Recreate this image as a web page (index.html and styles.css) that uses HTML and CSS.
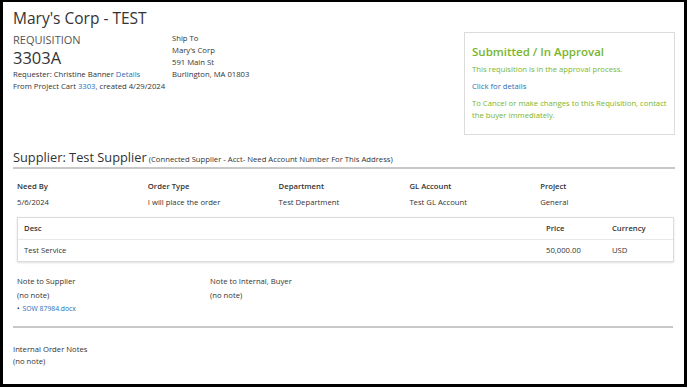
FILE: index.html
```html
<!DOCTYPE html>
<html lang="en">
<head>
    <meta charset="UTF-8">
    <meta name="viewport" content="width=device-width, initial-scale=1.0">
    <title>Requisition 3303A</title>
    <link rel="stylesheet" href="styles.css">
</head>
<body>
    <div class="page">
        <h1 class="company">Mary's Corp - TEST</h1>

        <div class="head-row">
            <div class="req">
                <div class="req-label">REQUISITION</div>
                <div class="req-num">3303A</div>
                <div class="meta">Requester: Christine Banner <a href="#">Details</a></div>
                <div class="meta">From Project Cart <a href="#">3303</a>, created 4/29/2024</div>
            </div>

            <div class="ship">
                <div>Ship To</div>
                <div>Mary's Corp</div>
                <div>591 Main St</div>
                <div>Burlington, MA 01803</div>
            </div>

            <div class="status">
                <h2>Submitted / In Approval</h2>
                <p>This requisition is in the approval process.</p>
                <p><a href="#">Click for details</a></p>
                <p>To Cancel or make changes to this Requisition, contact the buyer immediately.</p>
            </div>
        </div>

        <div class="supplier">
            <span class="supplier-name">Supplier: Test Supplier</span>
            <span class="supplier-note">(Connected Supplier - Acct- Need Account Number For This Address)</span>
        </div>

        <div class="fields">
            <div class="field">
                <div class="field-label">Need By</div>
                <div>5/6/2024</div>
            </div>
            <div class="field">
                <div class="field-label">Order Type</div>
                <div>I will place the order</div>
            </div>
            <div class="field">
                <div class="field-label">Department</div>
                <div>Test Department</div>
            </div>
            <div class="field">
                <div class="field-label">GL Account</div>
                <div>Test GL Account</div>
            </div>
            <div class="field">
                <div class="field-label">Project</div>
                <div>General</div>
            </div>
        </div>

        <div class="lines">
            <div class="line line-head">
                <div class="col-desc">Desc</div>
                <div class="col-price">Price</div>
                <div class="col-cur">Currency</div>
            </div>
            <div class="line">
                <div class="col-desc">Test Service</div>
                <div class="col-price">50,000.00</div>
                <div class="col-cur">USD</div>
            </div>
        </div>

        <div class="notes">
            <div class="note">
                <div>Note to Supplier</div>
                <div>(no note)</div>
                <ul class="files">
                    <li><a href="#">SOW 87984.docx</a></li>
                </ul>
            </div>
            <div class="note">
                <div>Note to Internal, Buyer</div>
                <div>(no note)</div>
            </div>
        </div>

        <div class="internal">
            <div>Internal Order Notes</div>
            <div>(no note)</div>
        </div>
    </div>
</body>
</html>
```

FILE: styles.css
```css
:root {
    --text-color: #333;
    --muted-color: #555;
    --link-color: #2a6db5;
    --green-color: #7ab52a;
    --border-color: #dcdcdc;
    --rule-color: #c8c8c8;
}

* {
    margin: 0;
    padding: 0;
    box-sizing: border-box;
}

body {
    font-family: 'Open Sans', 'Noto Sans', sans-serif;
    color: var(--text-color);
    background: #fff;
}

a {
    color: var(--link-color);
    text-decoration: none;
}

.page {
    width: 687px;
    height: 387px;
    border: 3px solid #000;
    border-top-width: 2px;
    padding: 5px 9px 0 10px;
    font-size: 7.7px;
    line-height: 12px;
}

.company {
    font-size: 15.5px;
    font-weight: 400;
    line-height: 22px;
}

.head-row {
    display: flex;
    align-items: flex-start;
    margin-top: 3px;
}

.req {
    width: 159px;
    padding-top: 1px;
}

.req-label {
    font-size: 11px;
    line-height: 14px;
    color: var(--muted-color);
}

.req-num {
    font-size: 16.5px;
    line-height: 21px;
}

.meta {
    line-height: 12px;
}

.ship {
    line-height: 12px;
}

.status {
    margin-left: auto;
    width: 211px;
    height: 103px;
    border: 1px solid var(--border-color);
    padding: 11px 7px;
    color: var(--green-color);
}

.status h2 {
    font-size: 11.5px;
    font-weight: 600;
    line-height: 16px;
    margin-bottom: 3px;
}

.status p {
    line-height: 12px;
    margin-bottom: 5px;
}

.supplier {
    margin-top: 13px;
    padding-bottom: 1px;
    border-bottom: 2px solid var(--rule-color);
}

.supplier-name {
    font-size: 12.8px;
    line-height: 18px;
}

.supplier-note {
    font-size: 7.7px;
}

.fields {
    display: flex;
    padding: 9px 4px 0;
}

.field {
    width: 131px;
    line-height: 16px;
}

.field-label {
    font-weight: 600;
}

.lines {
    margin: 7px 1px 0 4px;
    border: 1px solid var(--border-color);
    box-shadow: 0 1px 2px rgba(0, 0, 0, 0.12);
}

.line {
    display: flex;
    padding: 0 6px;
    line-height: 21px;
}

.line-head {
    font-weight: 600;
    border-bottom: 1px solid #e8e8e8;
}

.col-desc {
    flex: 1;
}

.col-price {
    width: 66px;
}

.col-cur {
    width: 55px;
}

.notes {
    display: flex;
    padding: 12px 4px 10px;
    margin: 0 2px 8px 0;
    border-bottom: 2px solid var(--rule-color);
}

.note {
    width: 193px;
    line-height: 14px;
}

.files {
    list-style: none;
    font-size: 6.8px;
}

.files li::before {
    content: '\2022';
    color: var(--text-color);
    margin-right: 3px;
}

.internal {
    padding-top: 7px;
    line-height: 12px;
}
```
